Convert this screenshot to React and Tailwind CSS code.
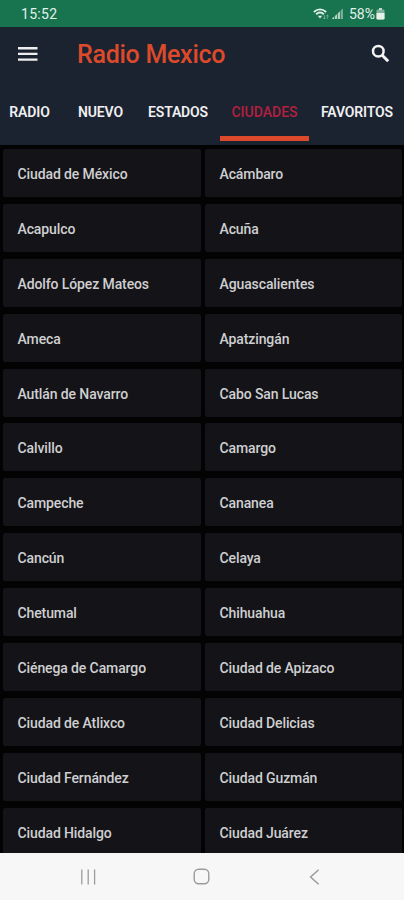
import {useState} from "react";

const TABS = ["RADIO", "NUEVO", "ESTADOS", "CIUDADES", "FAVORITOS"];

const CITIES = [
    "Ciudad de México", "Acámbaro",
    "Acapulco", "Acuña",
    "Adolfo López Mateos", "Aguascalientes",
    "Ameca", "Apatzingán",
    "Autlán de Navarro", "Cabo San Lucas",
    "Calvillo", "Camargo",
    "Campeche", "Cananea",
    "Cancún", "Celaya",
    "Chetumal", "Chihuahua",
    "Ciénega de Camargo", "Ciudad de Apizaco",
    "Ciudad de Atlixco", "Ciudad Delicias",
    "Ciudad Fernández", "Ciudad Guzmán",
    "Ciudad Hidalgo", "Ciudad Juárez"
];

const App = () => {
    const [activeTab, setActiveTab] = useState("CIUDADES");

    return (
        <div className="flex h-[900px] w-[404px] flex-col overflow-hidden bg-[#030304] font-['Roboto',sans-serif]">
            <StatusBar/>
            <header className="h-[118px] shrink-0 bg-[#1c2330]">
                <Toolbar/>
                <Tabs active={activeTab} onSelect={setActiveTab}/>
            </header>
            <CityGrid/>
            <NavigationBar/>
        </div>
    );
};

const StatusBar = () => (
    <div className="flex h-[27px] shrink-0 items-center bg-[#18734f] pl-[21px] pr-[19px] text-[#e3f1ea]">
        <span className="text-[14px] leading-none tracking-[0.3px]">15:52</span>
        <div className="ml-auto flex items-center">
            {/* Wifi */}
            <svg className="mr-[3px] h-[12px] w-[16px]" viewBox="0 0 16 12" fill="none" stroke="currentColor">
                <path d="M.8 4C4.6 .8 9.4 .8 13.2 4" strokeWidth="1.8"/>
                <path d="M3.1 6.2c2.3-2 5.5-2 7.8 0" strokeWidth="1.8"/>
                <path d="M4.8 7.8h4.4L7 10.6z" fill="currentColor" stroke="none"/>
                <path d="M11.4 7v4M10 9.6l1.4 1.4 1.4-1.4M14.4 11V7M13 8.4L14.4 7l1.4 1.4" strokeWidth=".7" opacity=".5"/>
            </svg>
            {/* Signal */}
            <svg className="mr-[6px] h-[11px] w-[11px]" viewBox="0 0 11 11" fill="currentColor">
                <path d="M0 11h2.2V8.6L0 10.4zM2.9 11h2.2V6L2.9 8z" opacity=".75"/>
                <path d="M5.8 11H8V3.2l-2.2 2z" opacity=".75"/>
                <path d="M8.7 11h2.2V.6L8.7 2.6z" opacity=".5"/>
            </svg>
            <span className="text-[14px] leading-none">58%</span>
            {/* Battery */}
            <svg className="ml-px mt-[1px] h-[12px] w-[9px]" viewBox="0 0 9 12" fill="currentColor">
                <path d="M3 0h3v2H3z" opacity=".8"/>
                <rect x=".5" y="1.4" width="8" height="10.2" rx="1.4" opacity=".5"/>
                <path d="M.5 5h8v5.2a1.4 1.4 0 0 1-1.4 1.4H1.9A1.4 1.4 0 0 1 .5 10.2z"/>
            </svg>
        </div>
    </div>
);

const Toolbar = () => (
    <div className="flex h-[54px] items-center pl-[18px] pr-[14px]">
        <button aria-label="Menú">
            <svg className="h-[16px] w-[20px]" viewBox="0 0 20 16" fill="#eeeeef">
                <path d="M0 1h19.5v2.4H0zM0 6.7h19.5v2.4H0zM0 12.4h19.5v2.4H0z"/>
            </svg>
        </button>
        <h1 className="ml-[39px] text-[25px] font-medium leading-none tracking-[-0.28px] text-[#dc4a2b]">Radio Mexico</h1>
        <button aria-label="Buscar" className="mb-[2px] ml-auto">
            <svg className="h-[19px] w-[19px]" viewBox="0 0 19 19" fill="none" stroke="#f4f4f5">
                <circle cx="7.3" cy="7.2" r="5.3" strokeWidth="2.5"/>
                <path d="M11.2 11.2l6 6" strokeWidth="3"/>
            </svg>
        </button>
    </div>
);

const Tabs = ({active, onSelect}) => (
    <nav className="grid h-[60px] grid-cols-[59px_83px_72px_101px_84px]">
        {
        TABS.map((tab) => (
            <button key={tab}
                onClick={
                    () => onSelect(tab)
                }
                className={
                    `flex flex-col items-center whitespace-nowrap text-[14px] leading-none ${
                        tab === active ? "font-medium text-[#b3203f]" : "font-semibold tracking-[-0.15px] text-[#f0f0f2]"
                    }`
            }>
                <span className="mt-[24px]">{tab}</span>
                {
                tab === active && <span className="mt-[17px] h-[5px] w-[89px] bg-[#dc4a2b]"/>
            } </button>
        ))
    } </nav>
);

const CityGrid = () => (
    <main className="grid min-h-0 flex-1 auto-rows-[48px] grid-cols-[198px_197px] content-start gap-x-[4px] gap-y-[6.9px] overflow-hidden pl-[3px] pt-[4px]">
        {
        CITIES.map((city) => (
            <div key={city} className="flex items-center rounded-[2px] bg-[#141418] pl-[14.5px] pt-[2px] text-[14px] font-medium leading-none tracking-[-0.11px] text-[#cfcfd1]">
                {city}
            </div>
        ))
    } </main>
);

const NavigationBar = () => (
    <div className="flex h-[47px] shrink-0 items-center bg-[#f7f7f7] pl-[80px] text-[#9b9b9b]">
        <svg className="h-[16px] w-[16px]" viewBox="0 0 16 16" stroke="currentColor" strokeWidth="1.3">
            <path d="M1.8 .5v15M8.2 .5v15M14.6 .5v15"/>
        </svg>
        <svg className="ml-[97px] h-[17px] w-[17px]" viewBox="0 0 17 17" fill="none" stroke="currentColor" strokeWidth="1.4">
            <rect x="1.2" y="1.2" width="14.6" height="14.6" rx="4.5"/>
        </svg>
        <svg className="ml-[99px] h-[16px] w-[11px]" viewBox="0 0 11 16" fill="none" stroke="currentColor" strokeWidth="1.5">
            <path d="M9.6 .8L1.6 8l8 7.2"/>
        </svg>
    </div>
);

export default App;
